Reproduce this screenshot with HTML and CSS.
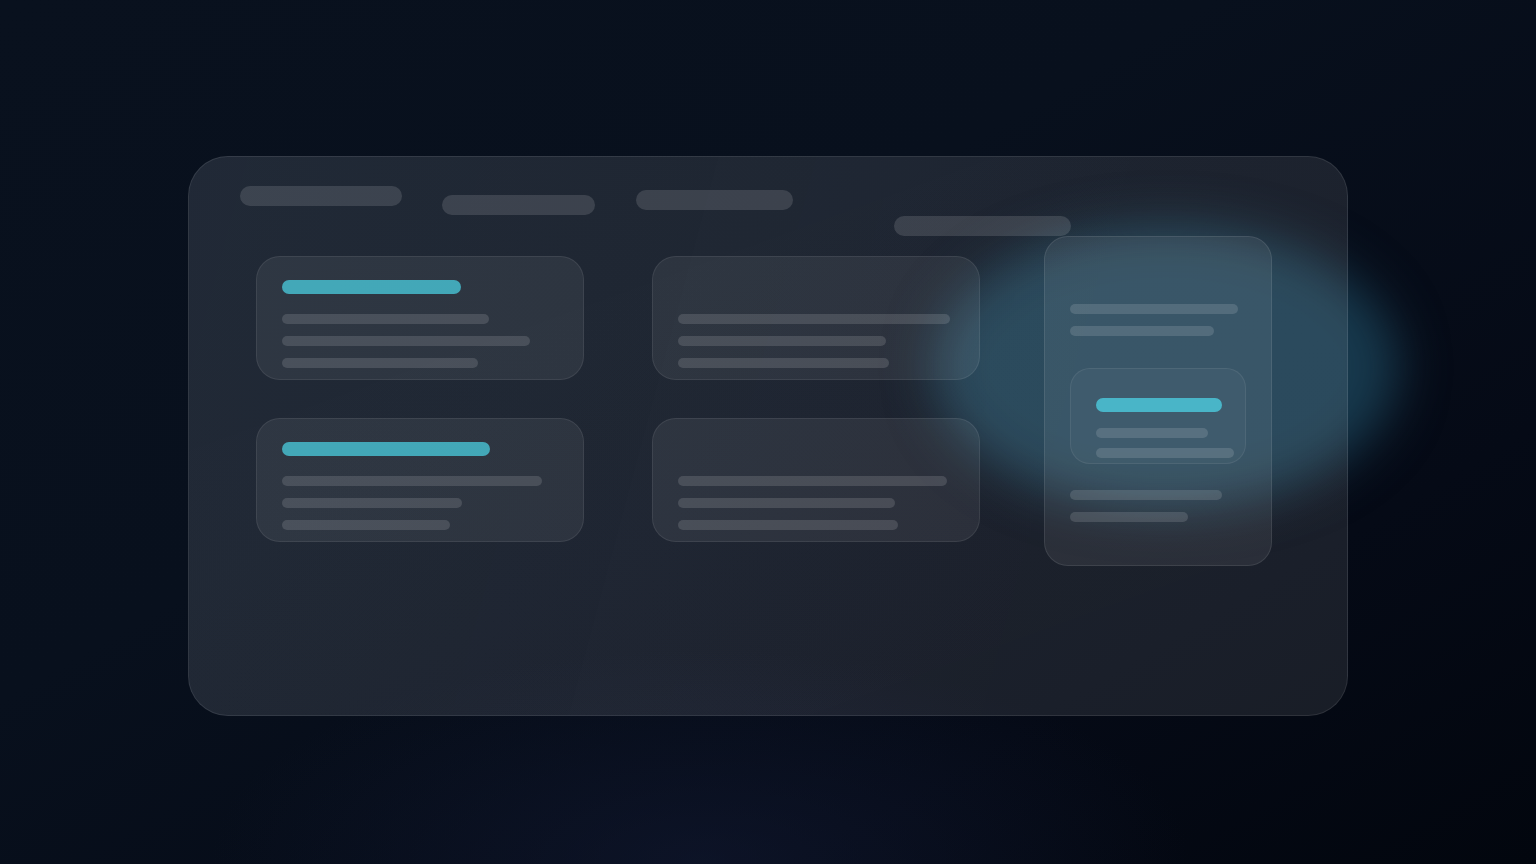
FILE: index.html
```html
<!DOCTYPE html>
<html lang="en">
<head>
<meta charset="utf-8">
<title>Dashboard skeleton</title>
<link rel="stylesheet" href="styles.css">
</head>
<body>
<div class="stage">
  <div class="glow"></div>
  <div class="panel">
    <div class="header">
      <div class="pill pill-1"></div>
      <div class="pill pill-2"></div>
      <div class="pill pill-3"></div>
      <div class="pill pill-4"></div>
    </div>
    <div class="body">
      <div class="grid">
        <div class="card">
          <div class="accent" style="width:179px"></div>
          <div class="lines">
            <div class="line" style="width:207px"></div>
            <div class="line" style="width:248px"></div>
            <div class="line" style="width:196px"></div>
          </div>
        </div>
        <div class="card">
          <div class="accent ghost"></div>
          <div class="lines">
            <div class="line" style="width:272px"></div>
            <div class="line" style="width:208px"></div>
            <div class="line" style="width:211px"></div>
          </div>
        </div>
        <div class="card">
          <div class="accent" style="width:208px"></div>
          <div class="lines">
            <div class="line" style="width:260px"></div>
            <div class="line" style="width:180px"></div>
            <div class="line" style="width:168px"></div>
          </div>
        </div>
        <div class="card">
          <div class="accent ghost"></div>
          <div class="lines">
            <div class="line" style="width:269px"></div>
            <div class="line" style="width:217px"></div>
            <div class="line" style="width:220px"></div>
          </div>
        </div>
      </div>
      <div class="tall">
        <div class="lines">
          <div class="line" style="width:168px"></div>
          <div class="line" style="width:144px"></div>
        </div>
        <div class="inner">
          <div class="accent inner-accent" style="width:126px"></div>
          <div class="lines tight">
            <div class="line" style="width:112px"></div>
            <div class="line" style="width:138px"></div>
          </div>
        </div>
        <div class="lines">
          <div class="line" style="width:152px"></div>
          <div class="line" style="width:118px"></div>
        </div>
      </div>
    </div>
  </div>
</div>
</body>
</html>
```

FILE: styles.css
```css
* {
  box-sizing: border-box;
}

html, body {
  margin: 0;
  height: 100%;
}

body {
  font-family: "Inter", "Liberation Sans", sans-serif;
  background:
    radial-gradient(ellipse 700px 300px at 700px 860px, rgba(20, 28, 55, 0.5), transparent 70%),
    linear-gradient(150deg, #09111e 0%, #08101d 40%, #050a16 75%, #02060e 100%);
  overflow: hidden;
}

.stage {
  position: relative;
  width: 100vw;
  height: 100vh;
  padding: 156px 0 0 188px;
}

.glow {
  position: absolute;
  left: 934px;
  top: 226px;
  width: 464px;
  height: 282px;
  border-radius: 50%;
  background: #17394d;
  filter: blur(24px);
  z-index: 0;
}

.panel {
  position: relative;
  z-index: 1;
  width: 1160px;
  height: 560px;
  border-radius: 40px;
  border: 1px solid rgba(255, 255, 255, 0.09);
  background:
    linear-gradient(105deg, rgba(120, 150, 200, 0.04) 0%, rgba(120, 150, 200, 0.02) 45%, rgba(0, 0, 0, 0) 75%),
    linear-gradient(160deg, rgba(255, 255, 255, 0.085) 0%, rgba(255, 255, 255, 0.09) 60%, rgba(255, 255, 255, 0.085) 100%);
  padding: 29px 0 0 51px;
}

.header {
  display: flex;
  align-items: flex-start;
  height: 50px;
}

.pill {
  height: 20px;
  border-radius: 10px;
  background: rgba(255, 255, 255, 0.13);
}

.pill-1 { width: 162px; }
.pill-2 { width: 153px; margin-left: 40px; margin-top: 9px; }
.pill-3 { width: 157px; margin-left: 41px; margin-top: 4px; }
.pill-4 { width: 177px; margin-left: 101px; margin-top: 30px; }

.body {
  display: flex;
  align-items: flex-start;
  padding-left: 16px;
}

.grid {
  margin-top: 20px;
  display: grid;
  grid-template-columns: 328px 328px;
  column-gap: 68px;
  row-gap: 38px;
}

.card {
  height: 124px;
  border-radius: 24px;
  border: 1px solid rgba(255, 255, 255, 0.08);
  background: rgba(255, 255, 255, 0.068);
  padding: 23px 25px 0;
}

.accent {
  height: 14px;
  border-radius: 7px;
  background: rgba(79, 235, 254, 0.63);
  margin-bottom: 20px;
}

.accent.ghost {
  background: transparent;
}

.lines {
  display: flex;
  flex-direction: column;
  gap: 12px;
}

.lines.tight {
  gap: 10px;
}

.line {
  height: 10px;
  border-radius: 5px;
  background: rgba(255, 255, 255, 0.135);
}

.tall {
  margin-left: 64px;
  width: 228px;
  height: 330px;
  border-radius: 24px;
  border: 1px solid rgba(255, 255, 255, 0.09);
  background: rgba(255, 255, 255, 0.07);
  padding: 67px 25px 0;
}

.inner {
  margin: 32px 0 26px;
  width: 176px;
  height: 96px;
  border-radius: 20px;
  border: 1px solid rgba(255, 255, 255, 0.07);
  background: rgba(255, 255, 255, 0.035);
  padding: 29px 25px 0;
}

.inner-accent {
  margin-bottom: 16px;
}
```
